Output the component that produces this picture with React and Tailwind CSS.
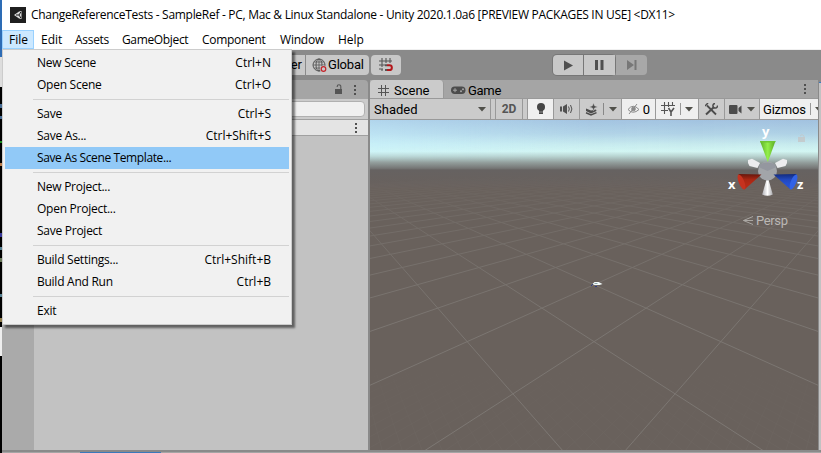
import React from "react";

const UI = "font-['Open_Sans','Noto_Sans',sans-serif]";
const ED = "font-['Roboto','Inter',sans-serif]";

const menuBar = [
  ["File", "w-8 pl-[7px] bg-[#cce8ff] outline outline-1 -outline-offset-1 outline-[#99d1ff]"],
  ["Edit", "w-[34px] pl-[7px]"],
  ["Assets", "w-[47px] pl-[7px] tracking-[-0.3px]"],
  ["GameObject", "w-20 pl-[7px] tracking-[-0.35px]"],
  ["Component", "w-[78px] pl-[7px] tracking-[-0.3px]"],
  ["Window", "w-[58px] pl-[7px] tracking-[-0.2px]"],
  ["Help", "w-10 pl-[7px]"],
];

const fileMenu = [
  ["New Scene", "Ctrl+N"],
  ["Open Scene", "Ctrl+O"],
  null,
  ["Save", "Ctrl+S"],
  ["Save As...", "Ctrl+Shift+S"],
  ["Save As Scene Template...", "", true],
  null,
  ["New Project...", ""],
  ["Open Project...", ""],
  ["Save Project", ""],
  null,
  ["Build Settings...", "Ctrl+Shift+B"],
  ["Build And Run", "Ctrl+B"],
  null,
  ["Exit", ""],
];

function FileMenu() {
  return (
    <div className="absolute left-[2px] top-[49px] z-10 h-[276px] w-[290px] border border-[#ccc] bg-[#f1f1f1] px-[2px] pt-[2px] shadow-[3px_3px_2px_rgba(0,0,0,0.5)]">
      {fileMenu.map((item, i) =>
        item ? (
          <div key={i} className={`flex h-[22px] items-center justify-between pl-8 pr-[18px] text-xs text-black ${item[2] ? "bg-[#91c9f7]" : ""}`}>
            <span className={item[2] ? "tracking-[-0.38px]" : "tracking-[-0.26px]"}>{item[0]}</span>
            <span>{item[1]}</span>
          </div>
        ) : (
          <div key={i} className="ml-7 flex h-[7px] items-center">
            <div className="h-px w-full bg-[#d2d2d2]" />
          </div>
        )
      )}
    </div>
  );
}

function Dots() {
  return (
    <svg width="4" height="12" viewBox="0 0 4 12" fill="#505050">
      <rect x="1" y="1" width="2" height="2" /><rect x="1" y="5" width="2" height="2" /><rect x="1" y="9" width="2" height="2" />
    </svg>
  );
}

function Lock({ color = "#555" }) {
  return (
    <svg width="9" height="11" viewBox="0 0 9 11">
      <rect x="1" y="5" width="7" height="5" fill={color} />
      <path d="M3.2 3V2.4a1.8 1.6 0 0 1 3.6 0V5" fill="none" stroke={color} strokeWidth="1.1" />
    </svg>
  );
}

function Caret() {
  return <svg width="8" height="5" viewBox="0 0 8 5"><path d="M0 0h8L4 4.5z" fill="#50504a" /></svg>;
}

// Each world-grid line runs from a vanishing point on the horizon down past the viewport.
function gridLines(step, range) {
  const out = [];
  for (let c = -range; c <= range; c += step) {
    for (const s of [1, -1]) {
      out.push([594 + s * 291.4, 154, 594 + s * 291.4 + 360 * (0.338 * c - s * 2.229), 514]);
    }
  }
  return out;
}
const coarse = gridLines(2, 44);
const fine = gridLines(0.2, 9);

function SceneView() {
  return (
    <svg className="block" width="448" height="330" viewBox="370 120 448 330">
      <defs>
        <linearGradient id="sky" x1="0" y1="120" x2="0" y2="188" gradientUnits="userSpaceOnUse">
          <stop offset="0" stopColor="#a2c2e0" />
          <stop offset="0.2" stopColor="#b0d2e6" />
          <stop offset="0.36" stopColor="#c8ebee" />
          <stop offset="0.46" stopColor="#d3f6f3" />
          <stop offset="0.53" stopColor="#b9d4d1" />
          <stop offset="0.63" stopColor="#919c9a" />
          <stop offset="0.71" stopColor="#757675" />
          <stop offset="0.735" stopColor="#666261" />
          <stop offset="1" stopColor="#69615d" />
        </linearGradient>
        <linearGradient id="sun" x1="370" y1="0" x2="818" y2="0" gradientUnits="userSpaceOnUse">
          <stop offset="0" stopColor="#c8f2ff" stopOpacity="0.6" />
          <stop offset="0.5" stopColor="#c8f0ff" stopOpacity="0.08" />
          <stop offset="1" stopColor="#c8f0ff" stopOpacity="0" />
        </linearGradient>
        <linearGradient id="sunFade" x1="0" y1="120" x2="0" y2="162" gradientUnits="userSpaceOnUse">
          <stop offset="0" stopColor="#aaa" /><stop offset="0.6" stopColor="#fff" /><stop offset="1" stopColor="#000" />
        </linearGradient>
        <mask id="m0" maskUnits="userSpaceOnUse" x="370" y="120" width="448" height="42"><rect x="370" y="120" width="448" height="42" fill="url(#sunFade)" /></mask>
        <linearGradient id="fade" x1="0" y1="160" x2="0" y2="450" gradientUnits="userSpaceOnUse">
          <stop offset="0.05" stopColor="#000" />
          <stop offset="0.2" stopColor="#777" />
          <stop offset="0.4" stopColor="#ccc" />
          <stop offset="0.6" stopColor="#fff" />
        </linearGradient>
        <linearGradient id="near" x1="0" y1="350" x2="0" y2="450" gradientUnits="userSpaceOnUse">
          <stop offset="0" stopColor="#000" />
          <stop offset="1" stopColor="#fff" />
        </linearGradient>
        <mask id="m1" maskUnits="userSpaceOnUse" x="370" y="120" width="448" height="330"><rect x="370" y="120" width="448" height="330" fill="url(#fade)" /></mask>
        <mask id="m2" maskUnits="userSpaceOnUse" x="370" y="120" width="448" height="330"><rect x="370" y="120" width="448" height="330" fill="url(#near)" /></mask>
        <linearGradient id="green"><stop offset="0" stopColor="#5cae28" /><stop offset="0.5" stopColor="#93ef4b" /><stop offset="1" stopColor="#58a522" /></linearGradient>
        <linearGradient id="red" x1="0" y1="173" x2="0" y2="184" gradientUnits="userSpaceOnUse"><stop offset="0" stopColor="#5c130a" /><stop offset="0.6" stopColor="#a82714" /><stop offset="1" stopColor="#b42a16" /></linearGradient>
        <linearGradient id="blue" x1="0" y1="173" x2="0" y2="184" gradientUnits="userSpaceOnUse"><stop offset="0" stopColor="#102672" /><stop offset="0.6" stopColor="#2248bd" /><stop offset="1" stopColor="#2450d2" /></linearGradient>
        <linearGradient id="white"><stop offset="0" stopColor="#b0b0b5" /><stop offset="0.5" stopColor="#fff" /><stop offset="1" stopColor="#a8a8ac" /></linearGradient>
      </defs>
      <rect x="370" y="120" width="448" height="330" fill="#69615c" />
      <rect x="370" y="120" width="448" height="68" fill="url(#sky)" />
      <rect x="370" y="120" width="448" height="42" fill="url(#sun)" mask="url(#m0)" />
      <g mask="url(#m1)" stroke="#8a8783" strokeWidth="1" opacity="0.56">
        {coarse.map((l, i) => <line key={i} x1={l[0]} y1={l[1]} x2={l[2]} y2={l[3]} />)}
      </g>
      <g mask="url(#m2)" stroke="#8a8783" strokeWidth="0.7" opacity="0.13">
        {fine.map((l, i) => <line key={i} x1={l[0]} y1={l[1]} x2={l[2]} y2={l[3]} />)}
      </g>
      <path d="M592.500 284l2-2h4l4 2-3 1h-5z" fill="#f4fbfb" />
      <path d="M594.500 283.500h3" stroke="#90a9ac" />
      <path d="M591 286l2-2M595 286.500h2" stroke="#303c83" />
      <path d="M748 163v-3l4-1.200 8 4.200-2.500 5-8-2z" fill="#ececee" />
      <path d="M787 163v-3l-4-1.200-8 4.200 2.500 5 8-2z" fill="#ececee" />
      <path d="M767.500 176l-5.300 18.500q5.300 2.500 10.600 0z" fill="url(#white)" />
      <circle cx="767.500" cy="171" r="9.500" fill="#a2a5a9" />
      <path d="M758.500 167l2-3q7-3 14 0l2 3-9 4z" fill="#94979f" />
      <path d="M760 141h15.500l-7.700 21z" fill="url(#green)" />
      <path d="M760 141h15.500l-.4 1.500h-14.500z" fill="#70c634" />
      <path d="M761.500 174.500l-23-.5 6 15.500z" fill="url(#red)" />
      <ellipse cx="741.500" cy="182" rx="2.800" ry="8" transform="rotate(-22 741.5 182)" fill="#c5321f" />
      <path d="M773.500 174.500l23-.5-6 15.500z" fill="url(#blue)" />
      <ellipse cx="793.500" cy="182" rx="2.800" ry="8" transform="rotate(22 793.5 182)" fill="#3263e6" />
      <g className="font-['Open_Sans',sans-serif]" fontSize="13" fontWeight="700" fill="#fff">
        <text x="762" y="136">y</text><text x="728" y="189">x</text><text x="797" y="189">z</text>
      </g>
      <g fill="#c5c5c5" opacity=".75"><rect x="798" y="137" width="7" height="5" /><path d="M800 136q2-3 4 0v1" fill="none" stroke="#c5c5c5" /></g>
      <path d="M753 216.500l-9.500 4 9.500 4M743.500 220.500h9.500" fill="none" stroke="#aaa7a3" strokeWidth="1" />
      <text x="756" y="225" fontSize="13" fill="#bab7b4" textLength="32" className="font-['Roboto',sans-serif]">Persp</text>
    </svg>
  );
}

function Toolbar() {
  return (
    <div className="flex h-[30px] bg-[#8a8a8a] pl-[268px] pt-[5px]">
      <div className="flex h-5 w-[35px] items-center justify-end rounded-l-sm bg-[#c8c8c8] pr-[3px] text-[13px]">er</div>
      <div className="ml-px flex h-5 w-[63px] items-center rounded-r-sm bg-[#c8c8c8] pl-[6px] text-[13px]">
        <svg width="15" height="15" viewBox="0 0 15 15" fill="none" stroke="#555" strokeWidth="1">
          <circle cx="7" cy="7" r="6" /><ellipse cx="7" cy="7" rx="3" ry="6" /><path d="M1 7h12M7 1v12M2 4h10M2 10h7" strokeWidth=".8" />
          <circle cx="11.500" cy="11" r="3.500" fill="#c8c8c8" stroke="none" /><circle cx="11.500" cy="11" r="2.300" stroke="#c4242a" strokeWidth="1.200" />
        </svg>
        <span className="ml-px tracking-[-0.2px]">Global</span>
      </div>
      <div className="ml-[2px] flex h-5 w-[30px] items-center justify-center rounded-sm bg-[#c8c8c8]">
        <svg width="16" height="16" viewBox="0 0 16 16" fill="none">
          <path d="M4 1v9M8 1v5M12 1v5M1 4h13M1 8h6M1 12h4M4 12v2" stroke="#555" strokeWidth="1.100" />
          <path d="M9 8.300h2.500a2.300 2.300 0 0 1 0 4.700H9" stroke="#b3161a" strokeWidth="2" /><path d="M7 8.300h2M7 13h2" stroke="#555" strokeWidth="2" />
        </svg>
      </div>
      <div className="ml-[152px] flex h-5 items-stretch gap-px rounded-sm bg-[#777] shadow-[0_0_0_1px_#777]">
        <div className="flex w-[30px] items-center justify-center rounded-l-sm bg-[#c8c8c8]"><svg width="9" height="11"><path d="M0 .5L9 5.500 0 10.500z" fill="#505050" /></svg></div>
        <div className="flex w-[31px] items-center justify-center bg-[#c8c8c8]"><svg width="9" height="10"><path d="M0 0h3v10H0zM5.500 0h3v10h-3z" fill="#505050" /></svg></div>
      </div>
      <div className="ml-px flex h-5 w-[31px] items-center justify-center rounded-r-sm bg-[#a8a8a8]"><svg width="10" height="10"><path d="M0 0L7 5 0 10zM7.500 0h2v10h-2z" fill="#777" /></svg></div>
    </div>
  );
}

function Hierarchy() {
  return (
    <div className="flex h-[370px] w-[366px] flex-col">
      <div className="flex h-[19px] items-center justify-end gap-[10px] rounded-tr-sm bg-[#a5a5a5] pr-[11px]"><Lock /><Dots /></div>
      <div className="flex h-5 items-center bg-[#cbcbcb] pr-[3px]"><div className="h-4 w-full rounded border border-[#b0b0b0] bg-[#f0f0f0]" /></div>
      <div className="flex h-[17px] items-center justify-end border-y border-[#a0a0a0] bg-[#e4e4e4] pr-[10px]"><Dots /></div>
      <div className="flex flex-1"><div className="w-8 bg-[#aaa]" /><div className="flex-1 bg-[#c2c2c2]" /></div>
    </div>
  );
}

function SceneToolbar() {
  const cell = "flex h-full shrink-0 items-center border-r border-[#999]";
  return (
    <div className="flex h-[22px] w-[448px] overflow-hidden border-b border-t border-[#999] bg-[#cbcbcb] text-[13px]">
      <div className={`${cell} w-[121px] justify-between pl-1 pr-1`}><span className="pt-px">Shaded</span><Caret /></div>
      <div className={`${cell} w-[5px]`} />
      <div className={`${cell} w-[27px] justify-center text-xs font-bold text-[#555]`}>2D</div>
      <div className={`${cell} w-[5px]`} />
      <div className={`${cell} w-[26px] justify-center bg-[#efefef]`}>
        <svg width="10" height="14" viewBox="0 0 10 14"><circle cx="5" cy="5" r="4" fill="#454545" /><path d="M3 8h4v4H3z" fill="#454545" /><path d="M3 10h4" stroke="#ddd" strokeWidth=".5" /></svg>
      </div>
      <div className={`${cell} w-[26px] justify-center`}>
        <svg width="13" height="12" viewBox="0 0 13 12"><path d="M0 3.500h2v5H0zM3 3.500L7 1v10L3 8.500z" fill="#505050" /><path d="M8.500 3.500q1.600 2.500 0 5M10.500 2q2.800 4 0 8" fill="none" stroke="#505050" /></svg>
      </div>
      <div className={`${cell} w-[42px] justify-center gap-[5px]`}>
        <svg width="13" height="13" viewBox="0 0 13 13"><path d="M1 5.500l5 2.100 5-1L11.500 8 6 10.500 1 8z" fill="#4c4c4c" /><path d="M1 9.800l5 2.200 5.500-2.400" fill="none" stroke="#4c4c4c" strokeWidth="1.500" /><path d="M8.500 0l1 2.800L12.500 4l-3 1-1 3-1-3-3-1 3-1.200z" fill="#4c4c4c" stroke="#cbcbcb" strokeWidth=".4" /></svg>
        <div className="h-3 w-px bg-[#888]" /><Caret />
      </div>
      <div className={`${cell} w-[34px] justify-center gap-[3px] bg-[#efefef]`}>
        <svg width="13" height="12" viewBox="0 0 13 12" fill="none" stroke="#8a8a8a"><path d="M1 6.500q5-6.500 11 0-6 5.500-11 0zM2 11L10 1" /><circle cx="6.500" cy="6" r="1.800" fill="#8a8a8a" /></svg><span className="pt-px">0</span>
      </div>
      <div className={`${cell} w-[43px] justify-center gap-[4px] bg-[#efefef]`}>
        <svg width="15" height="14" viewBox="0 0 15 14" fill="none" stroke="#555" strokeWidth="1.100"><path d="M3.500 0v12M7.500 0v5M11.500 0v4M0 3.500h14M0 8.500h7" /><path d="M7.500 6l2.500 4 3-4M10 10v4" strokeWidth="1.600" /></svg>
        <div className="h-3 w-px bg-[#999]" /><Caret />
      </div>
      <div className={`${cell} w-[26px] justify-center`}>
        <svg width="13" height="13" viewBox="0 0 13 13" fill="none" stroke="#4c4c4c"><path d="M2 2.500l9 9" strokeWidth="1.800" /><path d="M1 11.500L9 4" strokeWidth="2" /><path d="M12.500 2.500a2.300 2.300 0 1 1-2.500-2M0 3l3-3" strokeWidth="1.500" /></svg>
      </div>
      <div className={`${cell} w-[35px] justify-center gap-[5px]`}>
        <svg width="13" height="9" viewBox="0 0 13 9" fill="#4c4c4c"><rect y="0" width="8.500" height="9" rx="1" /><path d="M9.500 3l3-2.500v8l-3-2.500z" /></svg><Caret />
      </div>
      <div className="flex flex-1 items-center gap-[4px] overflow-hidden whitespace-nowrap bg-[#efefef] pl-[3px]"><span className="w-[43px] shrink-0 pt-px tracking-[-0.2px]">Gizmos</span><div className="h-3 w-px shrink-0 bg-[#999]" /><div className="shrink-0"><Caret /></div></div>
    </div>
  );
}

function Scene() {
  return (
    <div className="ml-[2px] flex w-[448px] flex-col">
      <div className="flex h-[18px] items-center bg-[#a5a5a5] text-[13px]">
        <div className="flex h-full w-[74px] items-center gap-[5px] rounded-t-sm border-r border-[#999] bg-[#cbcbcb] pl-2 pt-[3px]">
          <svg width="11" height="11" viewBox="0 0 11 11" stroke="#555"><path d="M3.500 0v11M7.500 0v11M0 3.500h11M0 7.500h11" /></svg><span>Scene</span>
        </div>
        <div className="flex flex-1 items-center gap-[2px] pl-[7px] pt-[3px]">
          <svg width="15" height="9" viewBox="0 0 15 9"><rect x="0" y=".5" width="14.500" height="7.500" rx="3.700" fill="#4c4c4c" /><path d="M2 4.200h4M4 2.200v4" stroke="#a5a5a5" /><circle cx="10" cy="5.200" r="1" fill="#a5a5a5" /><circle cx="12" cy="3.200" r="1" fill="#a5a5a5" /></svg><span className="tracking-[-0.3px]">Game</span>
        </div>
        <div className="pr-[11px]"><Dots /></div>
      </div>
      <SceneToolbar />
      <SceneView />
    </div>
  );
}

export default function App() {
  return (
    <div className={`relative flex h-[453px] w-[821px] overflow-hidden bg-white text-black ${ED}`}>
      <div className="flex w-[2px] flex-col bg-black">
        <div className="h-[57px] bg-[#2d6cb5]" /><div className="h-[30px] bg-[#ddd]" />
        <div className="mt-[17px] h-[4px] bg-[#476c94]" /><div className="mt-2 h-[3px] bg-[#476c94]" />
        <div className="mt-[22px] h-[2px] bg-[#1b8d1d]" /><div className="mt-5 h-[3px] bg-[#b87b4a]" />
        <div className="mt-[67px] h-[4px] bg-[#383899]" /><div className="mt-[10px] h-[3px] bg-[#557f91]" /><div className="mt-2 h-[4px] bg-[#69785a]" />
        <div className="mt-[32px] h-[3px] bg-[#557f91]" /><div className="mt-[21px] h-[4px] bg-[#8f7c4b]" />
        <div className="mt-[5px] h-[29px] bg-[#eee]" />
      </div>
      <div className="flex w-[819px] flex-col">
        <div className={`flex h-[30px] items-center gap-[5px] pl-2 text-xs ${UI}`}>
          <svg width="16" height="16" viewBox="0 0 16 16"><rect width="16" height="16" fill="#1f1f1f" /><path d="M4 8l5-3.500 2.500-.5v8L9 11.500z" fill="#dcdcdc" /><path d="M6 8h3M9 8l1.800-3M9 8l1.800 3" stroke="#1f1f1f" strokeWidth="1" fill="none" /></svg>
          <span className="whitespace-nowrap tracking-[-0.29px]">ChangeReferenceTests - SampleRef - PC, Mac &amp; Linux Standalone - Unity 2020.1.0a6 [PREVIEW PACKAGES IN USE] &lt;DX11&gt;</span>
        </div>
        <div className={`flex h-[20px] border-b border-[#f0f0f0] text-xs ${UI}`}>
          {menuBar.map(([label, cls]) => <div key={label} className={`flex items-center ${cls}`}>{label}</div>)}
        </div>
        <Toolbar />
        <div className="flex h-[370px] bg-[#8a8a8a]">
          <Hierarchy />
          <Scene />
          <div className="ml-px mt-[2px] flex-1 border-t border-[#3a78c2] bg-[#c2c2c2]" />
        </div>
        <div className="h-[2px] bg-[#8a8a8a]" />
        <div className="flex h-px bg-[#a5a5a5] pl-[78px]"><div className="w-[81px] bg-[#3a79bb]" /></div>
      </div>
      <div className={UI}><FileMenu /></div>
    </div>
  );
}
